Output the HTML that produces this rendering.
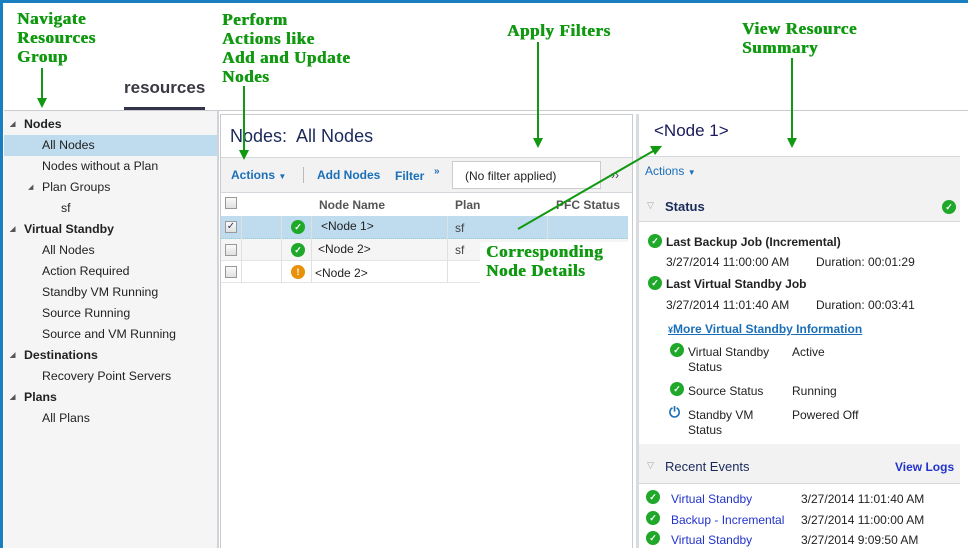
<!DOCTYPE html>
<html><head><meta charset="utf-8"><style>
*{margin:0;padding:0;box-sizing:border-box}
body{width:968px;height:548px;position:relative;overflow:hidden;background:#fff;font-family:"Liberation Sans",Arial,sans-serif;font-size:12px;color:#222}
.a{position:absolute;white-space:nowrap}
.ann{position:absolute;font-family:"Liberation Serif",serif;font-weight:bold;font-size:17px;line-height:19px;color:#119911;letter-spacing:0.6px;white-space:nowrap;text-shadow:0.6px 0 0 #119911}
.sb{position:absolute;left:4px;top:111px;width:215px;height:437px;background:#f5f5f5;border-right:2px solid #d0d4d8}
.sb div{position:absolute;left:0;width:213px;height:21px;line-height:21px;font-size:12.3px;white-space:nowrap}
.sb .h{font-weight:bold;padding-left:20px}
.sb .tri{position:absolute;left:6px;top:0;font-size:7px;color:#555}
.blue{color:#1a6fb8;font-weight:bold}
.chk{position:absolute;width:12px;height:12px;border:1px solid #999;background:linear-gradient(#fafafa,#e0e0e0)}
.ok{position:absolute;width:14px;height:14px;border-radius:50%;background:#1fa82a;color:#fff;font-size:9px;line-height:14px;text-align:center;font-weight:bold}
.hl{position:absolute;height:1px;background:#d4d8dc}
</style></head><body>
<div class="a" style="left:0;top:0;width:968px;height:3px;background:#1a7fc1"></div>
<div class="a" style="left:0;top:0;width:3px;height:548px;background:#1a7fc1"></div>

<div class="ann" style="left:17px;top:9px">Navigate<br>Resources<br>Group</div>
<div class="ann" style="left:222px;top:10px">Perform<br>Actions like<br>Add and Update<br>Nodes</div>
<div class="ann" style="left:507px;top:21px">Apply Filters</div>
<div class="ann" style="left:742px;top:19px">View Resource<br>Summary</div>

<div class="a" style="left:124px;top:78px;font-size:17px;font-weight:bold;color:#3a3a44">resources</div>
<div class="a" style="left:124px;top:107px;width:81px;height:3px;background:#33334a"></div>
<div class="hl" style="left:4px;top:110px;width:964px;background:#c8ccd0"></div>

<div class="sb">
<div class="h" style="top:3px"><span class="tri">◢</span>Nodes</div>
<div style="top:24px;padding-left:38px;background:#bedcee;height:21px">All Nodes</div>
<div style="top:45px;padding-left:38px">Nodes without a Plan</div>
<div style="top:66px;padding-left:38px"><span class="tri" style="left:24px">◢</span>Plan Groups</div>
<div style="top:87px;padding-left:57px">sf</div>
<div class="h" style="top:108px"><span class="tri">◢</span>Virtual Standby</div>
<div style="top:129px;padding-left:38px">All Nodes</div>
<div style="top:150px;padding-left:38px">Action Required</div>
<div style="top:171px;padding-left:38px">Standby VM Running</div>
<div style="top:192px;padding-left:38px">Source Running</div>
<div style="top:213px;padding-left:38px">Source and VM Running</div>
<div class="h" style="top:234px"><span class="tri">◢</span>Destinations</div>
<div style="top:255px;padding-left:38px">Recovery Point Servers</div>
<div class="h" style="top:276px"><span class="tri">◢</span>Plans</div>
<div style="top:297px;padding-left:38px">All Plans</div>
</div>

<!-- middle -->
<div class="a" style="left:220px;top:114px;width:413px;height:434px;border:1px solid #c8ccd0;border-bottom:none;background:#fff"></div>
<div class="a" style="left:230px;top:126px;font-size:18px;color:#1a2a5a">Nodes:&nbsp; All Nodes</div>
<div class="a" style="left:221px;top:157px;width:411px;height:36px;background:#f2f2f2;border-top:1px solid #d4d8dc;border-bottom:1px solid #d4d8dc"></div>
<div class="a blue" style="left:231px;top:168px">Actions <span style="font-size:8px">▼</span></div>
<div class="a" style="left:303px;top:167px;width:1px;height:16px;background:#bbb"></div>
<div class="a blue" style="left:317px;top:168px">Add Nodes</div>
<div class="a blue" style="left:395px;top:169px">Filter</div>
<div class="a blue" style="left:434px;top:166px;font-size:10px">»</div>
<div class="a" style="left:452px;top:161px;width:149px;height:28px;background:#fff;border:1px solid #ccc;padding:7px 0 0 12px">(No filter applied)</div>
<div class="a" style="left:611px;top:168px;color:#444">››</div>
<!-- table -->
<div class="a" style="left:221px;top:193px;width:407px;height:23px;background:#fff"></div>
<div class="chk" style="left:225px;top:197px"></div>
<div class="a" style="left:319px;top:198px;font-weight:bold;color:#555">Node Name</div>
<div class="a" style="left:455px;top:198px;font-weight:bold;color:#555">Plan</div>
<div class="a" style="left:556px;top:198px;font-weight:bold;color:#555">PFC Status</div>
<div class="a" style="left:221px;top:216px;width:407px;height:23px;background:#bedcee;border-bottom:1px dotted #9cc"></div>
<div class="a" style="left:221px;top:239px;width:407px;height:22px;background:#f5f5f5;border-bottom:1px solid #e4e4e4"></div>
<div class="a" style="left:221px;top:261px;width:407px;height:22px;background:#fff;border-bottom:1px solid #e4e4e4"></div>
<div class="a" style="left:241px;top:216px;width:1px;height:67px;background:#e0e0e0"></div>
<div class="a" style="left:281px;top:216px;width:1px;height:67px;background:#e0e0e0"></div>
<div class="a" style="left:311px;top:216px;width:1px;height:67px;background:#e0e0e0"></div>
<div class="a" style="left:447px;top:216px;width:1px;height:67px;background:#e0e0e0"></div>
<div class="a" style="left:547px;top:216px;width:1px;height:23px;background:#e0e0e0"></div>
<div class="chk" style="left:225px;top:221px;font-size:10px;line-height:10px;color:#335;text-align:center">✓</div>
<div class="chk" style="left:225px;top:244px"></div>
<div class="chk" style="left:225px;top:266px"></div>
<div class="ok" style="left:291px;top:220px">✓</div>
<div class="ok" style="left:291px;top:243px">✓</div>
<div class="ok" style="left:291px;top:265px;background:#e8900a">!</div>
<div class="a" style="left:321px;top:219px">&lt;Node 1&gt;</div>
<div class="a" style="left:318px;top:242px">&lt;Node 2&gt;</div>
<div class="a" style="left:315px;top:266px">&lt;Node 2&gt;</div>
<div class="a" style="left:455px;top:221px;color:#444">sf</div>
<div class="a" style="left:455px;top:243px;color:#444">sf</div>
<div class="a" style="left:480px;top:242px;width:148px;height:43px;background:#fff"></div>
<div class="ann" style="left:486px;top:242px">Corresponding<br>Node Details</div>

<!-- right -->
<div class="a" style="left:636px;top:114px;width:3px;height:434px;background:#d8dce0"></div>
<div class="a" style="left:654px;top:121px;font-size:17px;color:#1a1a5a">&lt;Node 1&gt;</div>
<div class="a" style="left:639px;top:156px;width:321px;height:30px;background:#f2f2f2;border-top:1px solid #d4d8dc"></div>
<div class="a blue" style="left:645px;top:164px;font-weight:normal">Actions <span style="font-size:8px">▼</span></div>
<div class="a" style="left:639px;top:186px;width:321px;height:36px;background:#f2f2f2;border-bottom:1px solid #d4d8dc"></div>
<div class="a" style="left:647px;top:200px;font-size:9px;color:#aaa">▽</div>
<div class="a" style="left:665px;top:199px;font-size:13px;font-weight:bold;color:#1a2a5a">Status</div>
<div class="ok" style="left:942px;top:200px">✓</div>
<div class="ok" style="left:648px;top:234px">✓</div>
<div class="a" style="left:666px;top:235px;font-weight:bold">Last Backup Job (Incremental)</div>
<div class="a" style="left:666px;top:255px">3/27/2014 11:00:00 AM</div>
<div class="a" style="left:816px;top:255px">Duration: 00:01:29</div>
<div class="ok" style="left:648px;top:276px">✓</div>
<div class="a" style="left:666px;top:277px;font-weight:bold">Last Virtual Standby Job</div>
<div class="a" style="left:666px;top:298px">3/27/2014 11:01:40 AM</div>
<div class="a" style="left:816px;top:298px">Duration: 00:03:41</div>
<div class="a" style="left:668px;top:322px;color:#1a6fb8;font-weight:bold;text-decoration:underline"><span style="text-decoration:none;font-size:9px">¥</span>More Virtual Standby Information</div>
<div class="ok" style="left:670px;top:343px">✓</div>
<div class="a" style="left:688px;top:345px;line-height:15px">Virtual Standby<br>Status</div>
<div class="a" style="left:792px;top:345px">Active</div>
<div class="ok" style="left:670px;top:382px">✓</div>
<div class="a" style="left:688px;top:384px">Source Status</div>
<div class="a" style="left:792px;top:384px">Running</div>
<div class="a" style="left:669px;top:404px;font-size:14px;color:#1a6fb8;font-weight:bold">⏻</div>
<div class="a" style="left:688px;top:408px;line-height:15px">Standby VM<br>Status</div>
<div class="a" style="left:792px;top:408px">Powered Off</div>
<div class="a" style="left:639px;top:444px;width:321px;height:40px;background:#f2f2f2;border-bottom:1px solid #d4d8dc"></div>
<div class="a" style="left:647px;top:460px;font-size:9px;color:#aaa">▽</div>
<div class="a" style="left:665px;top:459px;font-size:13px;color:#1a2a5a">Recent Events</div>
<div class="a" style="left:895px;top:460px;color:#2233cc;font-weight:bold">View Logs</div>
<div class="ok" style="left:646px;top:490px">✓</div>
<div class="a" style="left:671px;top:492px;color:#2233cc">Virtual Standby</div>
<div class="a" style="left:801px;top:492px">3/27/2014 11:01:40 AM</div>
<div class="ok" style="left:646px;top:511px">✓</div>
<div class="a" style="left:671px;top:513px;color:#2233cc">Backup - Incremental</div>
<div class="a" style="left:801px;top:513px">3/27/2014 11:00:00 AM</div>
<div class="ok" style="left:646px;top:531px">✓</div>
<div class="a" style="left:671px;top:533px;color:#2233cc">Virtual Standby</div>
<div class="a" style="left:801px;top:533px">3/27/2014 9:09:50 AM</div>

<!-- arrows -->
<svg class="a" style="left:0;top:0" width="968" height="548">
<g stroke="#119911" stroke-width="2" fill="#119911">
<line x1="42" y1="68" x2="42" y2="100"/><polygon points="37,98 47,98 42,108" stroke="none"/>
<line x1="244" y1="86" x2="244" y2="152"/><polygon points="239,150 249,150 244,160" stroke="none"/>
<line x1="538" y1="42" x2="538" y2="140"/><polygon points="533,138 543,138 538,148" stroke="none"/>
<line x1="792" y1="58" x2="792" y2="140"/><polygon points="787,138 797,138 792,148" stroke="none"/>
<line x1="518" y1="229" x2="655" y2="150"/><polygon points="662,146 650,146 655,155" stroke="none"/>
</g></svg>
</body></html>
